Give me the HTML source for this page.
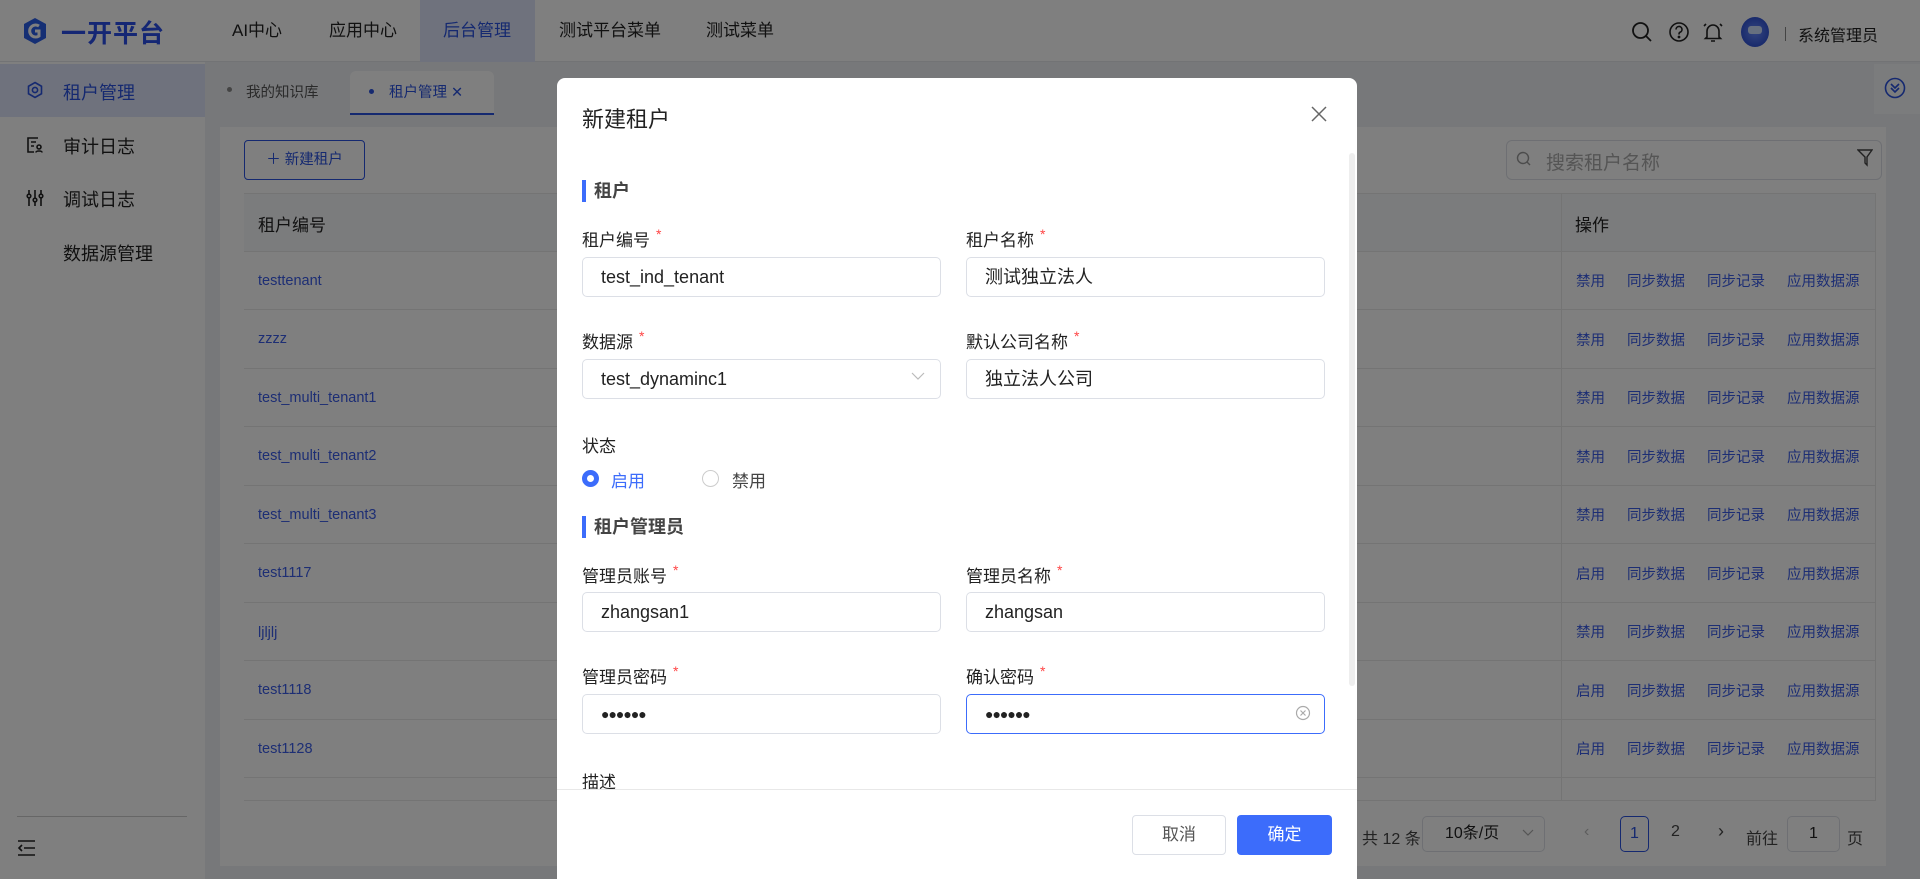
<!DOCTYPE html>
<html style="overflow:hidden"><head><meta charset="utf-8"><style>
*{box-sizing:border-box;margin:0;padding:0}
html,body{width:1920px;height:879px;overflow:hidden}
body{position:relative;font-family:"Liberation Sans","Noto Sans CJK SC",sans-serif;background:#eef0f4;color:#333}
.a{position:absolute;white-space:nowrap}
.hdr{left:0;top:0;width:1920px;height:62px;background:#fff;border-bottom:1px solid #e5e6eb}
.nav{top:0;height:62px;line-height:62px;font-size:17px;color:#222}
.side{left:0;top:62px;width:205px;height:817px;background:#fff}
.si{left:63px;font-size:18px;color:#222}
.op{font-size:14.5px;color:#3a5ce8;height:58.5px}
.op span{margin-right:22px}
.row{left:244px;width:1632px;height:1px;background:#e8e8e8}
.cell{left:258px;font-size:14.5px;color:#3a5ce8}
.ov{left:0;top:0;width:1920px;height:879px;background:rgba(0,0,0,0.5)}
.modal{left:557px;top:78px;width:800px;height:801px;background:#fff;border-radius:8px 8px 0 0}
.lbl{font-size:17px;color:#222}
.lbl i{color:#f44;font-style:normal;margin-left:6px;font-size:14px;vertical-align:top}
.inp{height:40px;border:1px solid #dcdfe6;border-radius:5px;font-size:18px;line-height:38px;padding-left:18px;color:#222}
.sec{font-size:18px;font-weight:bold;color:#444;border-left:4px solid #3c6cfb;padding-left:8px;line-height:22px}
</style></head><body>
<div class="a hdr"></div>
<svg class="a" style="left:22px;top:17px" width="26" height="28" viewBox="0 0 26 28"><path d="M13 1 L24 7 V21 L13 27 L2 21 V7Z" fill="#2a5ee8"/><path d="M17 9 A6 6 0 1 0 17 19 V14 H13" fill="none" stroke="#fff" stroke-width="3"/></svg>
<div class="a" style="left:61px;top:14px;font-size:25px;font-weight:bold;color:#2a4ee8;letter-spacing:1px">一开平台</div>
<div class="a nav" style="left:232px">AI中心</div>
<div class="a nav" style="left:329px">应用中心</div>
<div class="a" style="left:420px;top:0;width:115px;height:62px;background:#dfe5fb"></div>
<div class="a nav" style="left:443px;color:#2a52e0">后台管理</div>
<div class="a nav" style="left:559px">测试平台菜单</div>
<div class="a nav" style="left:706px">测试菜单</div>
<svg class="a" style="left:1631px;top:21px" width="22" height="22" viewBox="0 0 22 22" fill="none" stroke="#222" stroke-width="1.8"><circle cx="9.5" cy="9.5" r="7.5"/><path d="M15 15l5 5"/></svg>
<svg class="a" style="left:1668px;top:21px" width="22" height="22" viewBox="0 0 22 22" fill="none" stroke="#222" stroke-width="1.6"><circle cx="11" cy="11" r="9"/><path d="M8 8.5a3 3 0 1 1 4 2.8c-1 .4-1 1-1 2.2"/><circle cx="11" cy="16" r=".6" fill="#222"/></svg>
<svg class="a" style="left:1701px;top:20px" width="24" height="24" viewBox="0 0 24 24" fill="none" stroke="#222" stroke-width="1.6"><path d="M6 17V11a6 6 0 0 1 12 0v6l1.5 1.5h-15z"/><path d="M10 21h4M3 6l2-2M21 6l-2-2"/></svg>
<div class="a" style="left:1741px;top:17px;width:28px;height:30px;border-radius:50%;background:radial-gradient(circle,#6a8cff,#1c3fc8)"></div>
<div class="a" style="left:1748px;top:26px;width:14px;height:8px;border-radius:3px;background:#cfe0ff"></div>
<div class="a" style="left:1785px;top:27px;width:1px;height:14px;background:#888"></div>
<div class="a" style="left:1798px;top:22px;font-size:16px;color:#222">系统管理员</div>

<div class="a side"></div>
<div class="a" style="left:0;top:64px;width:205px;height:53px;background:#dfe5fb"></div>
<svg class="a" style="left:26px;top:81px" width="18" height="18" viewBox="0 0 18 18" fill="none" stroke="#2a52e0" stroke-width="1.6"><path d="M9 1.5l6.5 3.75v7.5L9 16.5 2.5 12.75v-7.5z"/><circle cx="9" cy="9" r="2.6"/></svg>
<div class="a si" style="left:63px;top:79px;color:#2a52e0">租户管理</div>
<svg class="a" style="left:26px;top:136px" width="18" height="18" viewBox="0 0 18 18" fill="none" stroke="#222" stroke-width="1.6"><path d="M12 2H2v14h6"/><path d="M5 6h5M5 10h3"/><circle cx="13" cy="11" r="2"/><path d="M10 16.5c0-2 6-2 6 0"/></svg>
<div class="a si" style="top:133px">审计日志</div>
<svg class="a" style="left:26px;top:189px" width="18" height="18" viewBox="0 0 18 18" fill="none" stroke="#222" stroke-width="1.6"><path d="M3 1v16M9 1v16M15 1v16"/><circle cx="3" cy="7" r="1.8" fill="#fff"/><circle cx="9" cy="11" r="1.8" fill="#fff"/><circle cx="15" cy="7" r="1.8" fill="#fff"/></svg>
<div class="a si" style="top:186px">调试日志</div>
<div class="a si" style="top:240px">数据源管理</div>
<div class="a" style="left:17px;top:816px;width:170px;height:1px;background:#ccc"></div>
<svg class="a" style="left:17px;top:839px" width="18" height="18" viewBox="0 0 18 18" fill="none" stroke="#222" stroke-width="1.6"><path d="M1 2h17M7 9h11M1 16h17M5 6l-3 3 3 3"/></svg>

<div class="a" style="left:205px;top:64px;width:1715px;height:53px;background:#eef0f4"></div>
<div class="a" style="left:227px;top:87px;width:5px;height:5px;border-radius:50%;background:#888"></div>
<div class="a" style="left:246px;top:81px;font-size:14.5px;color:#555">我的知识库</div>
<div class="a" style="left:350px;top:71px;width:144px;height:44px;background:#fff;border-bottom:2px solid #2a52e0;border-radius:6px 6px 0 0"></div>
<div class="a" style="left:369px;top:89px;width:5px;height:5px;border-radius:50%;background:#2a52e0"></div>
<div class="a" style="left:389px;top:81px;font-size:14.5px;color:#2a52e0">租户管理 ✕</div>
<div class="a" style="left:1874px;top:64px;width:46px;height:50px;background:#f7f8fa"></div>
<svg class="a" style="left:1884px;top:77px" width="22" height="22" viewBox="0 0 22 22" fill="none" stroke="#2a52e0" stroke-width="1.6"><circle cx="11" cy="11" r="9.5"/><path d="M7 7l4 4 4-4M7 11l4 4 4-4"/></svg>

<div class="a" style="left:220px;top:127px;width:1666px;height:739px;background:#fff"></div>
<div class="a" style="left:244px;top:140px;width:121px;height:40px;border:1px solid #2a52e0;border-radius:4px;font-size:14.5px;color:#2a52e0;line-height:38px;text-align:center">＋ 新建租户</div>
<div class="a" style="left:1506px;top:140px;width:376px;height:40px;border:1px solid #dcdfe6;border-radius:6px"></div>
<svg class="a" style="left:1516px;top:151px" width="16" height="16" viewBox="0 0 16 16" fill="none" stroke="#999" stroke-width="1.4"><circle cx="7" cy="7" r="5.5"/><path d="M11 11l3 3"/></svg>
<div class="a" style="left:1546px;top:148px;font-size:19px;color:#aaa">搜索租户名称</div>
<svg class="a" style="left:1857px;top:149px" width="16" height="18" viewBox="0 0 16 18" fill="none" stroke="#444" stroke-width="1.4"><path d="M1 1h14l-5 7v8l-2-2V8z"/></svg>
<div class="a" style="left:244px;top:193px;width:1632px;height:58px;background:#f7f8fa;border-top:1px solid #e8e8e8"></div>
<div class="a" style="left:258px;top:211px;font-size:17px;color:#222">租户编号</div>
<div class="a" style="left:1575px;top:211px;font-size:17px;color:#222">操作</div>
<div class="a" style="left:1561px;top:193px;width:1px;height:607px;background:#e8e8e8"></div>
<div class="a" style="left:1875px;top:193px;width:1px;height:607px;background:#e8e8e8"></div>
<div class="a row" style="top:251px"></div><div class="a row" style="top:309px"></div><div class="a row" style="top:368px"></div><div class="a row" style="top:426px"></div><div class="a row" style="top:485px"></div><div class="a row" style="top:543px"></div><div class="a row" style="top:602px"></div><div class="a row" style="top:660px"></div><div class="a row" style="top:719px"></div><div class="a row" style="top:777px"></div>
<div class="a cell" style="top:273px">testtenant</div>
<div class="a cell" style="top:331px">zzzz</div>
<div class="a cell" style="top:390px">test_multi_tenant1</div>
<div class="a cell" style="top:448px">test_multi_tenant2</div>
<div class="a cell" style="top:507px">test_multi_tenant3</div>
<div class="a cell" style="top:565px">test1117</div>
<div class="a cell" style="top:625px">ljljlj</div>
<div class="a cell" style="top:682px">test1118</div>
<div class="a cell" style="top:741px">test1128</div>
<div class="a" style="left:1576px;top:273px;line-height:18px">
<div class="op"><span>禁用</span><span>同步数据</span><span>同步记录</span>应用数据源</div>
<div class="op"><span>禁用</span><span>同步数据</span><span>同步记录</span>应用数据源</div>
<div class="op"><span>禁用</span><span>同步数据</span><span>同步记录</span>应用数据源</div>
<div class="op"><span>禁用</span><span>同步数据</span><span>同步记录</span>应用数据源</div>
<div class="op"><span>禁用</span><span>同步数据</span><span>同步记录</span>应用数据源</div>
<div class="op"><span>启用</span><span>同步数据</span><span>同步记录</span>应用数据源</div>
<div class="op"><span>禁用</span><span>同步数据</span><span>同步记录</span>应用数据源</div>
<div class="op"><span>启用</span><span>同步数据</span><span>同步记录</span>应用数据源</div>
<div class="op"><span>启用</span><span>同步数据</span><span>同步记录</span>应用数据源</div>
</div>
<div class="a" style="left:244px;top:800px;width:1632px;height:1px;background:#e8e8e8"></div>
<div class="a" style="left:1362px;top:825px;font-size:16px;color:#444">共 12 条</div>
<div class="a" style="left:1422px;top:816px;width:123px;height:36px;border:1px solid #dcdfe6;border-radius:5px;font-size:16px;line-height:34px;padding-left:22px;color:#222">10条/页</div>
<svg class="a" style="left:1522px;top:829px" width="12" height="8" viewBox="0 0 12 8" fill="none" stroke="#aaa" stroke-width="1.2"><path d="M1 1l5 5 5-5"/></svg>
<div class="a" style="left:1584px;top:823px;font-size:16px;color:#bbb">‹</div>
<div class="a" style="left:1620px;top:816px;width:29px;height:36px;border:1px solid #2a52e0;border-radius:5px;font-size:16px;line-height:34px;text-align:center;color:#2a52e0">1</div>
<div class="a" style="left:1671px;top:823px;font-size:16px;color:#444">2</div>
<div class="a" style="left:1718px;top:821px;font-size:18px;color:#444">›</div>
<div class="a" style="left:1746px;top:825px;font-size:16px;color:#444">前往</div>
<div class="a" style="left:1787px;top:816px;width:53px;height:36px;border:1px solid #dcdfe6;border-radius:5px;font-size:16px;line-height:34px;text-align:center;color:#222">1</div>
<div class="a" style="left:1847px;top:825px;font-size:16px;color:#444">页</div>

<div class="a ov"></div>

<div class="a modal"></div>
<div class="a" style="left:582px;top:102px;font-size:22px;color:#222">新建租户</div>
<svg class="a" style="left:1310px;top:105px" width="18" height="18" viewBox="0 0 18 18" stroke="#666" stroke-width="1.5"><path d="M2 2l14 14M16 2L2 16"/></svg>
<div class="a" style="left:1349px;top:153px;width:6px;height:533px;background:#eee;border-radius:3px"></div>
<div class="a sec" style="left:582px;top:180px">租户</div>
<div class="a lbl" style="left:582px;top:226px">租户编号<i>*</i></div>
<div class="a lbl" style="left:966px;top:226px">租户名称<i>*</i></div>
<div class="a inp" style="left:582px;top:257px;width:359px">test_ind_tenant</div>
<div class="a inp" style="left:966px;top:257px;width:359px">测试独立法人</div>
<div class="a lbl" style="left:582px;top:328px">数据源<i>*</i></div>
<div class="a lbl" style="left:966px;top:328px">默认公司名称<i>*</i></div>
<div class="a inp" style="left:582px;top:359px;width:359px">test_dynaminc1</div>
<svg class="a" style="left:911px;top:372px" width="14" height="9" viewBox="0 0 14 9" fill="none" stroke="#bbb" stroke-width="1.2"><path d="M1 1l6 6 6-6"/></svg>
<div class="a inp" style="left:966px;top:359px;width:359px">独立法人公司</div>
<div class="a lbl" style="left:582px;top:432px">状态</div>
<div class="a" style="left:582px;top:470px;width:17px;height:17px;border-radius:50%;border:5px solid #3c6cfb;background:#fff"></div>
<div class="a" style="left:611px;top:467px;font-size:17px;color:#3c6cfb">启用</div>
<div class="a" style="left:702px;top:470px;width:17px;height:17px;border-radius:50%;border:1px solid #ccc"></div>
<div class="a" style="left:732px;top:467px;font-size:17px;color:#444">禁用</div>
<div class="a sec" style="left:582px;top:516px">租户管理员</div>
<div class="a lbl" style="left:582px;top:562px">管理员账号<i>*</i></div>
<div class="a lbl" style="left:966px;top:562px">管理员名称<i>*</i></div>
<div class="a inp" style="left:582px;top:592px;width:359px">zhangsan1</div>
<div class="a inp" style="left:966px;top:592px;width:359px">zhangsan</div>
<div class="a lbl" style="left:582px;top:663px">管理员密码<i>*</i></div>
<div class="a lbl" style="left:966px;top:663px">确认密码<i>*</i></div>
<div class="a inp" style="left:582px;top:694px;width:359px;font-size:14px;letter-spacing:-1px">●●●●●●</div>
<div class="a inp" style="left:966px;top:694px;width:359px;font-size:14px;letter-spacing:-1px;border-color:#3c6cfb">●●●●●●</div>
<svg class="a" style="left:1295px;top:705px" width="16" height="16" viewBox="0 0 16 16" fill="none" stroke="#aaa" stroke-width="1.2"><circle cx="8" cy="8" r="6.5"/><path d="M5.5 5.5l5 5M10.5 5.5l-5 5"/></svg>
<div class="a lbl" style="left:582px;top:768px">描述</div>
<div class="a" style="left:557px;top:789px;width:800px;height:1px;background:#e8e8e8"></div>
<div class="a" style="left:1132px;top:815px;width:94px;height:40px;border:1px solid #dcdfe6;border-radius:4px;font-size:17px;line-height:38px;text-align:center;color:#555;background:#fff">取消</div>
<div class="a" style="left:1237px;top:815px;width:95px;height:40px;border-radius:4px;font-size:17px;line-height:40px;text-align:center;color:#fff;background:#3c6cfb">确定</div>
</body></html>
